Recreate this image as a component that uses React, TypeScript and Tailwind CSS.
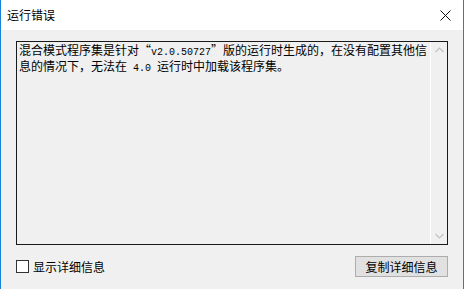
import React from 'react'

const cjk = "font-['Noto_Sans_CJK_SC',sans-serif]"
const latin = "font-['Liberation_Mono','Noto_Sans_CJK_SC',monospace] text-[10px] whitespace-pre"

function Chevron({ up }: { up?: boolean }) {
  return (
    <svg width="9" height="6" viewBox="0 0 9 6" className="block">
      <path
        d={up ? 'M0.5 5 L4.5 1 L8.5 5' : 'M0.5 1 L4.5 5 L8.5 1'}
        fill="none"
        stroke="#c2c2c2"
        strokeWidth="1.2"
      />
    </svg>
  )
}

export default function App() {
  return (
    <div className={`flex h-[289px] w-[468px] overflow-hidden bg-white ${cjk}`}>
      {/* Window */}
      <div className="flex h-full w-[464px] flex-col border-x border-[#1883d7] bg-[#f0f0f0]">
        {/* Title bar */}
        <div className="flex h-[30px] shrink-0 items-center justify-between bg-white pl-[6px] pr-[12px]">
          <span className="text-[12px] leading-none text-black">运行错误</span>
          <svg width="11" height="11" viewBox="0 0 11 11">
            <path d="M0.5 0.5 L10.5 10.5 M10.5 0.5 L0.5 10.5" stroke="#111" strokeWidth="1" />
          </svg>
        </div>

        {/* Content */}
        <div className="flex flex-1 flex-col px-[15px] pt-[11px]">
          <div className="flex h-[204px] w-[432px] border border-[#1a1a1a] bg-[#f0f0f0]">
            <div className="flex-1 whitespace-nowrap pl-[2px] pt-[1px] text-[12px] leading-[13px] text-black">
              混合模式程序集是针对“<span className={latin}>v2.0.50727</span>”版的运行时生成的，在没有配置其他信
              <br />
              息的情况下，无法在<span className={latin}> 4.0 </span>运行时中加载该程序集。
            </div>
            <div className="flex w-[17px] flex-col items-center justify-between border-l border-white py-[5px]">
              <Chevron up />
              <Chevron />
            </div>
          </div>

          <div className="mt-[11px] flex items-start justify-between">
            <label className="mt-[4px] flex items-center gap-[4px]">
              <span className="h-[13px] w-[13px] border border-[#333] bg-white" />
              <span className="text-[12px] leading-[13px] text-black">显示详细信息</span>
            </label>
            <button className="flex h-[21px] w-[93px] items-center justify-center border border-[#adadad] bg-[#e1e1e1] text-[12px] leading-none text-black">
              复制详细信息
            </button>
          </div>
        </div>
      </div>
    </div>
  )
}
